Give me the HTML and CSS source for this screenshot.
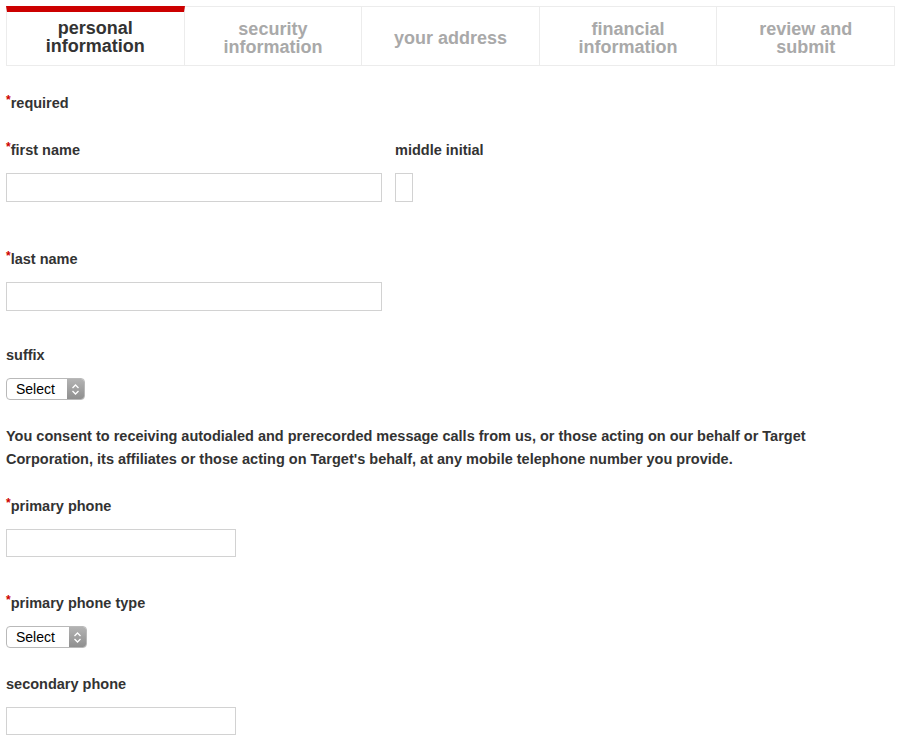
FILE: index.html
```html
<!DOCTYPE html>
<html lang="en">
<head>
    <meta charset="UTF-8">
    <meta name="viewport" content="width=device-width, initial-scale=1.0">
    <title>Apply - personal information</title>
    <link rel="stylesheet" href="styles.css">
</head>
<body>
    <!-- Step tabs -->
    <div class="steps">
        <div class="step active">personal<br>information</div>
        <div class="step">security<br>information</div>
        <div class="step">your address</div>
        <div class="step">financial<br>information</div>
        <div class="step">review and<br>submit</div>
    </div>

    <form class="form">
        <p class="required-note"><span class="req">*</span>required</p>

        <div class="row name-row">
            <div class="field first-name">
                <label><span class="req">*</span>first name</label>
                <input type="text" class="input wide">
            </div>
            <div class="field">
                <label>middle initial</label>
                <input type="text" class="input initial">
            </div>
        </div>

        <div class="field last-name">
            <label><span class="req">*</span>last name</label>
            <input type="text" class="input wide">
        </div>

        <div class="field suffix">
            <label>suffix</label>
            <div class="select">
                <span class="select-text">Select</span>
                <span class="select-arrows">
                    <svg width="9" height="13" viewBox="0 0 9 13"><path d="M1.5 5 L4.5 2 L7.5 5 M1.5 8 L4.5 11 L7.5 8" fill="none" stroke="#fff" stroke-width="1.3"/></svg>
                </span>
            </div>
        </div>

        <p class="consent">You consent to receiving autodialed and prerecorded message calls from us, or those acting on our behalf or Target Corporation, its affiliates or those acting on Target's behalf, at any mobile telephone number you provide.</p>

        <div class="field primary-phone">
            <label><span class="req">*</span>primary phone</label>
            <input type="text" class="input phone">
        </div>

        <div class="field phone-type">
            <label><span class="req">*</span>primary phone type</label>
            <div class="select select-type">
                <span class="select-text">Select</span>
                <span class="select-arrows">
                    <svg width="9" height="13" viewBox="0 0 9 13"><path d="M1.5 5 L4.5 2 L7.5 5 M1.5 8 L4.5 11 L7.5 8" fill="none" stroke="#fff" stroke-width="1.3"/></svg>
                </span>
            </div>
        </div>

        <div class="field secondary-phone">
            <label>secondary phone</label>
            <input type="text" class="input phone">
        </div>
    </form>
</body>
</html>
```

FILE: styles.css
```css
body {
    font-family: "Liberation Sans", Arial, sans-serif;
    margin: 0;
    padding: 6px 5px 0 6px;
    color: #333;
    background: #fff;
}
.steps {
    display: flex;
    width: 889px;
}
.step {
    flex: 1;
    box-sizing: border-box;
    height: 60px;
    padding-top: 4px;
    border: 1px solid #ececec;
    border-left: none;
    display: flex;
    align-items: center;
    justify-content: center;
    text-align: center;
    font-size: 18px;
    line-height: 18px;
    font-weight: bold;
    color: #a9a9a9;
}
.step:first-child {
    border-left: 1px solid #ececec;
}
.step.active {
    color: #333;
    border-top: 6px solid #cc0000;
    padding-top: 0;
    padding-bottom: 4px;
}
.form {
    font-size: 14.5px;
    font-weight: bold;
}
.req {
    color: #cc0000;
    font-size: 12px;
    vertical-align: 4px;
    line-height: 0;
}
.required-note {
    margin: 29px 0 0 0;
    line-height: 16px;
}
.row {
    display: flex;
    gap: 13px;
}
.name-row {
    margin-top: 31px;
}
.field label {
    display: block;
    line-height: 16px;
    margin-bottom: 15px;
}
.input {
    display: block;
    box-sizing: border-box;
    height: 28px;
    border: 1px solid #d2d2d2;
    margin: 0;
    padding: 0 6px;
    font-size: 14px;
}
.input.wide {
    width: 376px;
    height: 29px;
}
.input.initial {
    width: 18px;
    height: 29px;
}
.input.phone {
    width: 230px;
}
.last-name {
    margin-top: 49px;
}
.suffix {
    margin-top: 36px;
}
.select {
    display: inline-flex;
    box-sizing: border-box;
    width: 79px;
    height: 22px;
    border: 1px solid #b9b9b9;
    border-radius: 4px;
    overflow: hidden;
    font-size: 14px;
    font-weight: normal;
    color: #000;
    background: #fff;
}
.select-type {
    width: 81px;
}
.select-text {
    flex: 1;
    padding-left: 9px;
    line-height: 20px;
}
.select-arrows {
    width: 17px;
    background: linear-gradient(#b3b3b3, #8f8f8f);
    display: flex;
    align-items: center;
    justify-content: center;
}
.consent {
    margin: 25px 0 0 0;
    line-height: 23px;
    max-width: 860px;
}
.primary-phone {
    margin-top: 27px;
}
.phone-type {
    margin-top: 38px;
}
.secondary-phone {
    margin-top: 28px;
}
```
